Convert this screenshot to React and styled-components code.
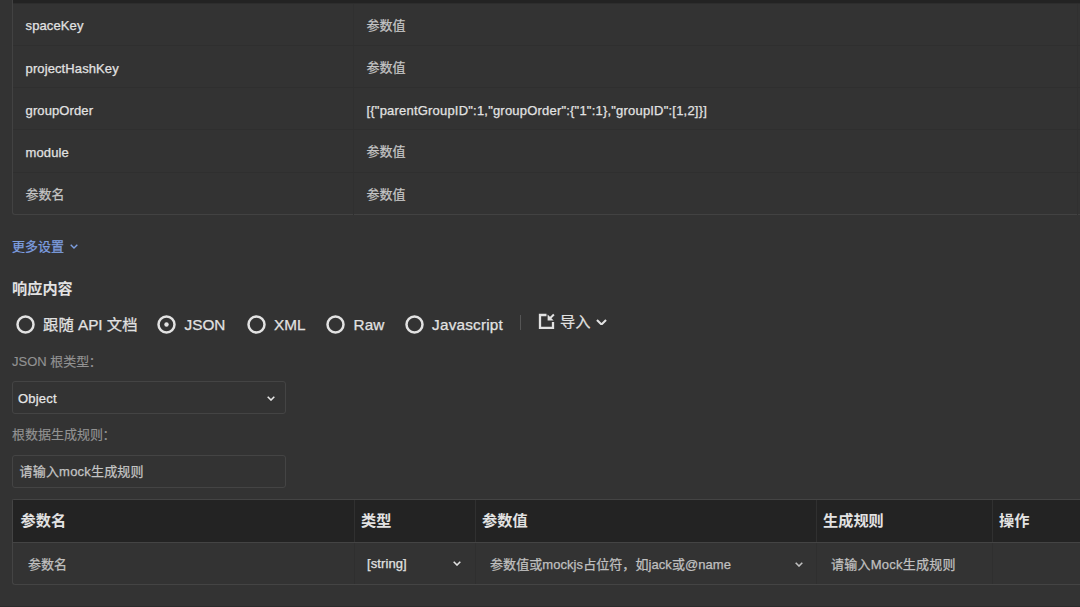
import React from "react";
import styled, { createGlobalStyle } from "styled-components";

const GlobalStyle = createGlobalStyle`
  *, *::before, *::after { box-sizing: border-box; }
  body {
    margin: 0;
    background: #333333;
    color: #e2e2e2;
    font-family: "Liberation Sans", "Noto Sans CJK SC", sans-serif;
    font-size: 13px;
    overflow: hidden;
  }
`;

const Page = styled.main`
  display: flex;
  flex-direction: column;
  width: 1080px;
  height: 607px;
  padding-left: 12px;
  overflow: hidden;
  border-bottom: 1px solid #2b2b2b;
`;

const ParamTable = styled.section`
  flex: none;
  height: 215px;
  border: solid #424242;
  border-width: 0 0 1px 1px;
  border-bottom-left-radius: 3px;
`;

const ParamHead = styled.div`
  height: 4px;
  background: #232323;
  border-bottom: 1px solid #2d2d2d;
`;

const ParamRow = styled.div`
  display: grid;
  grid-template-columns: 340.5px 724px 1fr;
  height: 42.15px;
  border-bottom: 1px solid #2f2f2f;

  &:last-child { border-bottom: 0; }
`;

const ParamCell = styled.div`
  display: flex;
  align-items: center;
  padding-left: ${(p) => (p.$value ? 13 : 12.6)}px;
  padding-top: ${(p) => (p.$muted ? 0 : 2.6)}px;
  border-right: 1px solid #303030;
  color: ${(p) => (p.$muted ? "#c4c4c4" : "#e2e2e2")};
  letter-spacing: ${(p) => p.$spacing || 0}px;
  -webkit-text-stroke: 0.25px currentColor;
  white-space: nowrap;
`;

const MoreLink = styled.div`
  display: flex;
  flex: none;
  align-items: center;
  gap: 6px;
  height: 20px;
  margin-top: 20px;
  color: #7e9fe0;
  -webkit-text-stroke: 0.25px currentColor;
`;

const Heading = styled.h2`
  flex: none;
  height: 22px;
  margin: 23px 0 0;
  font-size: 15.2px;
  line-height: 22px;
  font-weight: 700;
`;

const FormatBar = styled.div`
  display: flex;
  flex: none;
  align-items: center;
  height: 24px;
  margin-top: 12px;
  padding-left: 3.5px;
  font-size: 15.3px;
  white-space: nowrap;
`;

const Radio = styled.label`
  display: flex;
  flex: none;
  align-items: center;
  gap: 8.6px;
  width: ${(p) => p.$width}px;
  -webkit-text-stroke: 0.25px currentColor;
`;

const RadioText = styled.span`
  margin-top: ${(p) => p.$shift}px;
  letter-spacing: ${(p) => p.$spacing || 0}px;
`;

const Divider = styled.span`
  width: 1px;
  height: 15px;
  margin: -3px 17px 0 0;
  background: #555555;
`;

const ImportButton = styled.span`
  display: flex;
  align-items: center;
  gap: 5px;
  margin-top: -5px;
  -webkit-text-stroke: 0.2px currentColor;
`;

const ImportText = styled.span`
  margin-top: -3px;
`;

const FieldLabel = styled.div`
  flex: none;
  height: 20px;
  margin-top: ${(p) => p.$top}px;
  color: #929292;
  line-height: 20px;
  -webkit-text-stroke: 0.15px currentColor;
`;

const Colon = styled.span`
  margin-left: -0.5px;
`;

const Field = styled.div`
  display: flex;
  flex: none;
  align-items: center;
  justify-content: space-between;
  width: 274px;
  height: 33px;
  margin-top: ${(p) => p.$top}px;
  padding: ${(p) => (p.$muted ? "0" : "1px")} 10px ${(p) => (p.$muted ? "2px" : "0")} ${(p) => p.$left}px;
  border: 1px solid #444444;
  border-radius: 3px;
  color: ${(p) => (p.$muted ? "#c4c4c4" : "#e6e6e6")};
  letter-spacing: 0.2px;
  -webkit-text-stroke: 0.25px currentColor;
`;

const MockTable = styled.section`
  flex: none;
  height: 86px;
  margin-top: 11px;
  border: solid #444444;
  border-width: 1px 0 1px 1px;
  border-radius: 2px 0 0 3px;
`;

const MockRow = styled.div`
  display: grid;
  grid-template-columns: 342px 121px 341px 176px 1fr;
  height: ${(p) => (p.$head ? 43 : 41)}px;
  background: ${(p) => (p.$head ? "#232323" : "transparent")};
  border-bottom: ${(p) => (p.$head ? "1px solid #444444" : "0")};
`;

const HeadCell = styled.div`
  display: flex;
  align-items: center;
  padding-left: ${(p) => p.$left || 6}px;
  padding-bottom: 5px;
  border-right: 1px solid #303030;
  font-size: 15.2px;
  font-weight: 700;
  white-space: nowrap;

  &:last-child { border-right: 0; }
`;

const BodyCell = styled.div`
  display: flex;
  align-items: center;
  justify-content: space-between;
  padding: 0 ${(p) => p.$right || 14}px 0 ${(p) => p.$left}px;
  border-right: 1px solid #2f2f2f;
  color: ${(p) => (p.$muted ? "#c0c0c0" : "#e2e2e2")};
  letter-spacing: ${(p) => p.$spacing || 0}px;
  -webkit-text-stroke: 0.25px currentColor;
  white-space: nowrap;

  &:last-child { border-right: 0; }
`;

const ChevronSvg = styled.svg`
  flex: none;
  margin-top: ${(p) => p.$shift || 0}px;
`;

const Chevron = ({ size = 8, weight = 1.6, shift }) => (
  <ChevronSvg $shift={shift} width={size} height={size * 0.625} viewBox="0 0 8 5" fill="none" stroke="currentColor" strokeWidth={weight}>
    <path d="M.7.8 4 4 7.3.8" />
  </ChevronSvg>
);

const RadioMark = ({ checked }) => (
  <svg width="19" height="19" viewBox="0 0 19 19" fill="none" stroke="currentColor">
    <circle cx="9.5" cy="9.5" r="8" strokeWidth="2.5" />
    {checked && <circle cx="9.5" cy="9.5" r="2.2" fill="currentColor" stroke="none" />}
  </svg>
);

const ImportIcon = () => (
  <svg width="17" height="17" viewBox="0 0 17 17" fill="none" stroke="currentColor" strokeWidth="2.3">
    <path d="M8.5 2H2v12.8h13V9" />
    <path d="M15.9 1.6 12 5.2" strokeWidth="2" />
    <path d="M9.6 1.6v6h6z" fill="currentColor" stroke="none" />
  </svg>
);

const params = [
  { name: "spaceKey" },
  { name: "projectHashKey" },
  { name: "groupOrder", value: '[{"parentGroupID":1,"groupOrder":{"1":1},"groupID":[1,2]}]' },
  { name: "module" },
  {},
];

const formats = [
  { label: "跟随 API 文档", width: 141.5, shift: -2 },
  { label: "JSON", width: 89.5, shift: 1, checked: true },
  { label: "XML", width: 79.5, shift: 1 },
  { label: "Raw", width: 78.5, shift: 1 },
  { label: "Javascript", width: 115.5, shift: 1, spacing: 0.2 },
];

export default function App() {
  return (
    <>
      <GlobalStyle />
      <Page>
        <ParamTable>
          <ParamHead />
          {params.map(({ name, value }, i) => (
            <ParamRow key={i}>
              <ParamCell $muted={!name} $spacing={name ? 0.1 : 0}>{name || "参数名"}</ParamCell>
              <ParamCell $value $muted={!value} $spacing={value ? 0.2 : 0}>{value || "参数值"}</ParamCell>
            </ParamRow>
          ))}
        </ParamTable>

        <MoreLink>
          更多设置
          <Chevron weight={1.4} shift={3} />
        </MoreLink>

        <Heading>响应内容</Heading>

        <FormatBar>
          {formats.map(({ label, width, shift, spacing, checked }) => (
            <Radio key={label} $width={width}>
              <RadioMark checked={checked} />
              <RadioText $shift={shift} $spacing={spacing}>{label}</RadioText>
            </Radio>
          ))}
          <Divider />
          <ImportButton>
            <ImportIcon />
            <ImportText>导入</ImportText>
            <Chevron size={11} weight={1.5} shift={1} />
          </ImportButton>
        </FormatBar>

        <FieldLabel $top={16}>JSON 根类型<Colon>：</Colon></FieldLabel>
        <Field $left={5} $top={9}>
          Object
          <Chevron />
        </Field>

        <FieldLabel $top={11}>根数据生成规则<Colon>：</Colon></FieldLabel>
        <Field $left={6.5} $top={10} $muted>请输入mock生成规则</Field>

        <MockTable>
          <MockRow $head>
            <HeadCell $left={7.5}>参数名</HeadCell>
            <HeadCell>类型</HeadCell>
            <HeadCell>参数值</HeadCell>
            <HeadCell>生成规则</HeadCell>
            <HeadCell>操作</HeadCell>
          </MockRow>
          <MockRow>
            <BodyCell $left={15} $muted>参数名</BodyCell>
            <BodyCell $left={12} $spacing={0.1}>
              [string]
              <Chevron />
            </BodyCell>
            <BodyCell $left={14} $right={13} $spacing={0.07} $muted>
              参数值或mockjs占位符，如jack或@name
              <Chevron shift={2} />
            </BodyCell>
            <BodyCell $left={14} $spacing={0.25} $muted>请输入Mock生成规则</BodyCell>
            <BodyCell />
          </MockRow>
        </MockTable>
      </Page>
    </>
  );
}
